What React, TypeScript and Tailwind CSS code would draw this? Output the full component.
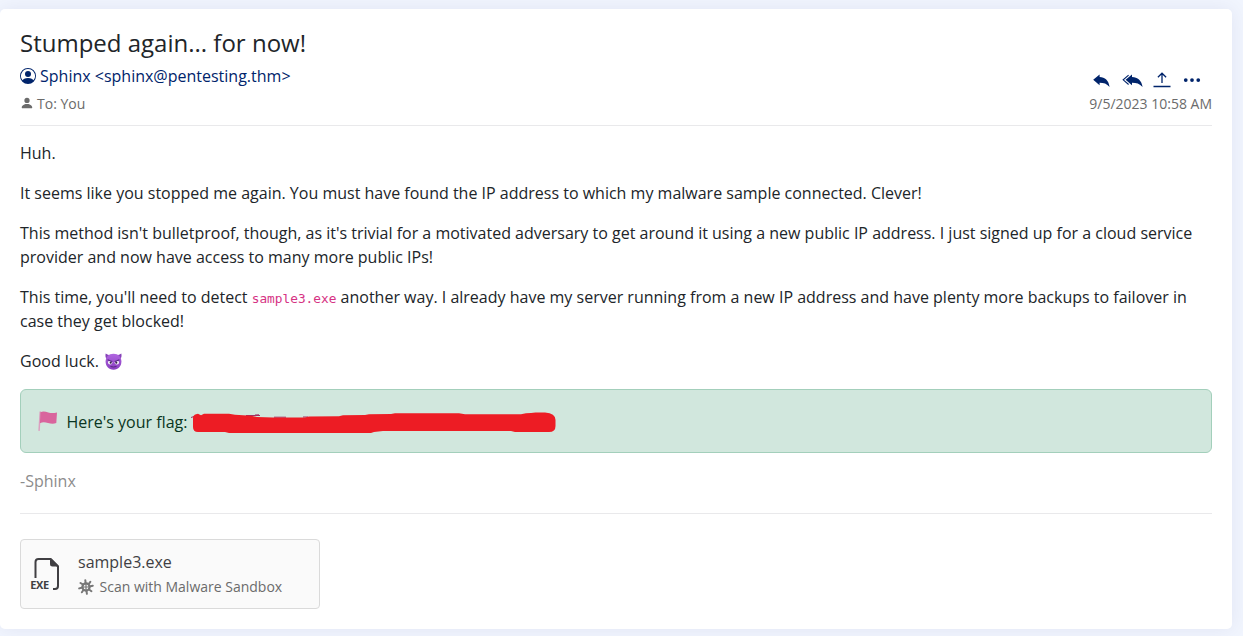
import React from "react";
import { BsPersonCircle, BsPersonFill, BsThreeDots } from "react-icons/bs";

function ReplyIcon() {
  return (
    <svg className="h-[14px] w-[17px]" viewBox="0 0 17 14" fill="currentColor">
      <path d="M0.200 5.800 6.600 0.600V3C12 3.200 15.600 6.200 16.600 13 13.700 9.700 10.800 8.800 6.600 8.800V11.200z" />
    </svg>
  );
}

function ReplyAllIcon() {
  return (
    <svg className="h-[14px] w-[21px]" viewBox="0 0 21 14" fill="currentColor">
      <path d="M3.600 5.800 10 0.600V3C15.600 3.200 19.500 6.200 20.600 13 17.600 9.700 14.400 8.800 10 8.800V11.200z" />
      <path d="M6.600 1.100 1.200 5.800 6.600 10.500" fill="none" stroke="currentColor" strokeWidth="1.100" />
    </svg>
  );
}

function UploadIcon() {
  return (
    <svg className="h-[16px] w-[18px]" viewBox="0 0 18 16" fill="none" stroke="currentColor" strokeWidth="1.300">
      <path d="M9 11V1.500M4.900 5.300 9 1.200l4.100 4.100M0.500 14.500h17" />
    </svg>
  );
}

function DevilIcon() {
  return (
    <svg className="ml-[2px] inline-block h-[17px] w-[17px] align-[-3px]" viewBox="0 0 17 17">
      <defs>
        <linearGradient id="devil" x1="0" y1="0" x2="0" y2="1">
          <stop offset="0" stopColor="#b066e0" />
          <stop offset="1" stopColor="#8a3fc0" />
        </linearGradient>
      </defs>
      <path d="M.7.5C.2 2.500.4 4.600 1.600 6L4.600 2.300C3.100 2 1.700 1.400.7.5zM16.300.5c.5 2 .3 4.100-.9 5.500L12.400 2.300c1.500-.3 2.900-.9 3.900-1.800z" fill="#8642b8" />
      <path d="M8.500.8C13.500.8 16.400 4 16.400 8.600S13.500 16.700 8.500 16.700.6 13.200.6 8.600 3.500.8 8.500.8z" fill="url(#devil)" />
      <ellipse cx="5.200" cy="9.600" rx="2.200" ry="2" fill="#fff" />
      <ellipse cx="11.800" cy="9.600" rx="2.200" ry="2" fill="#fff" />
      <circle cx="5.700" cy="9.700" r="1.100" fill="#35204a" />
      <circle cx="11.300" cy="9.700" r="1.100" fill="#35204a" />
      <path d="M2.600 6.800 7.300 8.600M14.400 6.800 9.700 8.600" stroke="#59288a" strokeWidth="1.200" />
      <path d="M5.500 13.500q3 1 6 0" fill="none" stroke="#55267f" strokeWidth="1" />
    </svg>
  );
}

function FlagIcon() {
  return (
    <svg className="h-[20px] w-[20px]" viewBox="0 0 20 20">
      <path d="M2.200 1 1.100 19.300" stroke="#dba0c0" strokeWidth="1.500" strokeLinecap="round" />
      <path d="M2.400 1.200c3-1.400 5.300-.4 7.900.3 2.900.8 5.500.6 8.700 0l-.7 10.600c-3 1-5.500.6-8.300-.1-2.700-.7-5.300-1.100-8.100.2z" fill="#d9659d" />
    </svg>
  );
}

function RedactionStroke() {
  return (
    <svg className="mt-[4px] h-[22px] w-[366px]" viewBox="0 0 366 22">
      <path d="M0 5.500 3 4.500M55 3.500h14M64 3l4-.200M83 5.200h12M112 5h5" stroke="#a03062" strokeWidth="1" />
      <path
        d="M2 6Q2 3.200 5 2.300L7 1.700 10 3.200 13 1.700H38L44 2.700 60 3.700 66 5 82 5.500H114L118 4.500 148 4.200 152 3.200 174 3 178 2.200 200 2 204 1.200H268L274 2.200H330L335 1.200 340 1 344.500.4H354Q364.500 1 364.500 8V14Q364.500 20 358 20H324L320 19H192L183 20 180 21H38L34 20H7Q2 20 2 15z"
        fill="#ed1c24"
      />
    </svg>
  );
}

function ExeFileIcon() {
  return (
    <svg className="h-[34px] w-[32px]" viewBox="0 0 32 34">
      <path d="M5.500 21V5Q5.500 2 8.500 2H20.500L28 9.500V29Q28 32 25 32H23" fill="none" stroke="#403f43" strokeWidth="2" />
      <path d="M20 1.500V7Q20 9.500 22.500 9.500H28.500V8.500L21.500 1.500z" fill="#403f43" />
      <text x="0.200" y="32" textLength="19" className="font-['Open_Sans',sans-serif] text-[11px] font-bold" fill="#403f43">EXE</text>
    </svg>
  );
}

function MalwareIcon() {
  return (
    <svg className="h-[16px] w-[16px]" viewBox="0 0 16 16" fill="none" stroke="#777" strokeWidth="2" strokeLinecap="round">
      <circle cx="8" cy="8" r="3.600" strokeWidth="2.200" />
      <path d="M7.300 1.200 7.700 4.500M12.300 2.800 10.500 5.300M14.800 6.700 11.500 7.400M13.400 12.200 10.800 10.300M8.900 14.800 8.400 11.500M3.900 13.300 5.600 10.800M1.200 9.400 4.500 8.500M2.500 4 5.200 5.600" />
      <path d="M8 5v6M5 8h6" strokeWidth="1.200" />
    </svg>
  );
}

export default function App() {
  return (
    <div className="h-[636px] overflow-hidden bg-[#f1f5fe] pt-[9px] pr-[11px] font-['Open_Sans',sans-serif] text-base leading-6 text-[#212529]">
      <main className="h-[620px] rounded-[5px] bg-white px-5 pt-[19px] shadow-[0_0_20px_rgba(0,30,100,0.07)]">
        <header className="flex h-[97px] justify-between">
          <div>
            <h1 className="text-2xl leading-[29px]">Stumped again... for now!</h1>
            <div className="mt-[7px] flex items-center gap-1 text-[#00246b]">
              <BsPersonCircle className="size-4" />
              <span>Sphinx &lt;sphinx@pentesting.thm&gt;</span>
            </div>
            <div className="mt-[6px] flex items-center gap-[3px] text-sm leading-5 text-[#6b6b6b]">
              <BsPersonFill className="mb-[2px] size-[14px]" />
              <span>To: You</span>
            </div>
          </div>
          <div className="flex flex-col items-end pt-[43px]">
            <div className="flex h-[18px] items-center pr-[10px] text-[#00246b]">
              <span className="mt-[2px] mr-3"><ReplyIcon /></span>
              <span className="mt-[2px] mr-[10px]"><ReplyAllIcon /></span>
              <span className="mr-[11px]"><UploadIcon /></span>
              <BsThreeDots className="size-5" />
            </div>
            <time className="mt-[5px] text-sm leading-5 text-[#6b6b6b]">9/5/2023 10:58 AM</time>
          </div>
        </header>
        <hr className="mb-[15px] border-[#e9e9eb]" />
        <section className="space-y-4">
          <p>Huh.</p>
          <p>It seems like you stopped me again. You must have found the IP address to which my malware sample connected. Clever!</p>
          <p>This method isn't bulletproof, though, as it's trivial for a motivated adversary to get around it using a new public IP address. I just signed up for a cloud service provider and now have access to many more public IPs!</p>
          <p>
            This time, you'll need to detect <code className="font-['DejaVu_Sans_Mono',monospace] text-[12.800px] leading-none text-[#d63384]">sample3.exe</code> another way. I already have my server running from a new IP address and have plenty more backups to failover in case they get blocked!
          </p>
          <p className="h-6">Good luck. <DevilIcon /></p>
          <div className="flex h-16 items-center rounded-md border border-[#a3cfbb] bg-[#d1e7dd] pl-[17px] text-[#0a3622]">
            <FlagIcon />
            <span className="mt-[2px] mr-1 ml-[8.500px]">Here's your flag:</span>
            <RedactionStroke />
          </div>
          <p className="text-[#8c8c8c]">-Sphinx</p>
        </section>
        <hr className="mt-5 mb-[25px] border-[#e9e9eb]" />
        <div className="flex h-[70px] w-[300px] rounded-[4px] border border-[#dadada] bg-[#fafafa] pl-[9px]">
          <div className="pt-[17px]"><ExeFileIcon /></div>
          <div className="ml-4 pt-[10px]">
            <div className="text-[#403f43]">sample3.exe</div>
            <div className="mt-[2px] flex items-center gap-[5.500px] text-sm leading-[22px] text-[#6b6b6b]">
              <MalwareIcon />
              <span>Scan with Malware Sandbox</span>
            </div>
          </div>
        </div>
      </main>
    </div>
  );
}
